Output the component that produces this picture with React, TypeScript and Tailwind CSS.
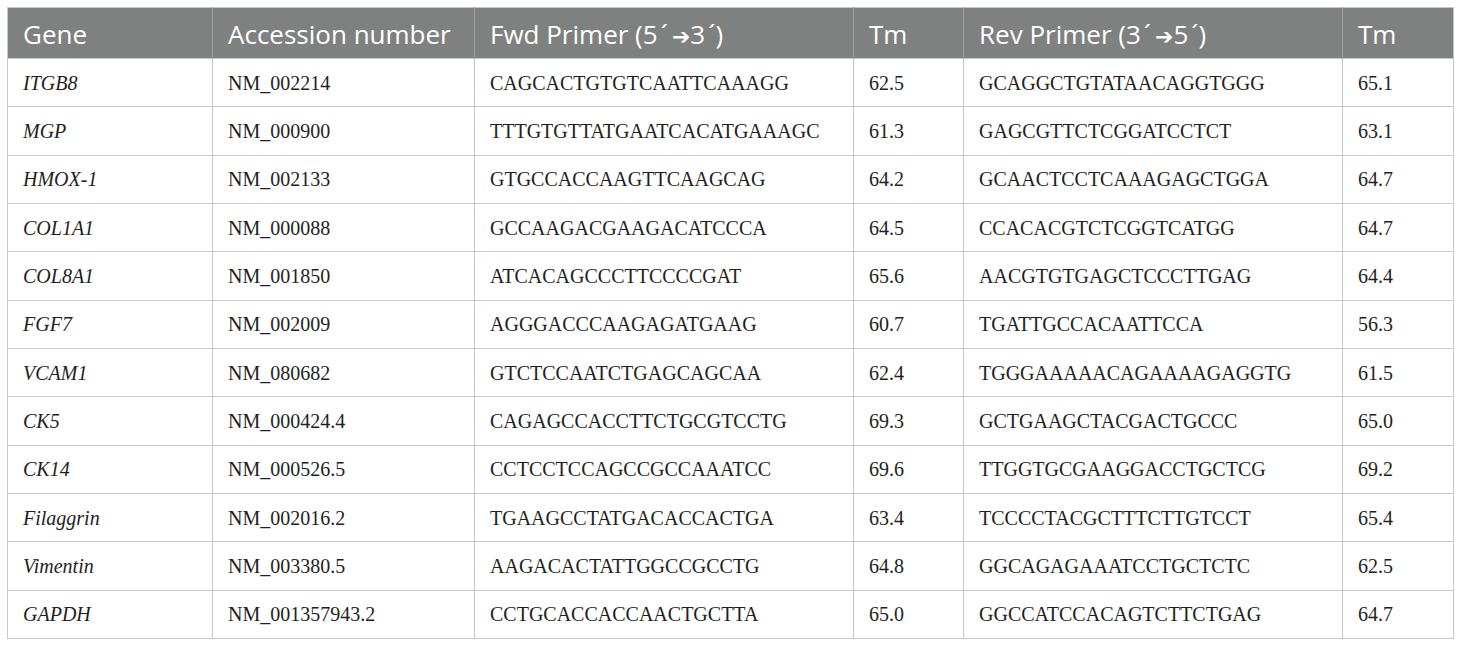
import React from 'react';

type Row = { gene: string; acc: string; fwd: string; tmF: string; rev: string; tmR: string };

const rows: Row[] = [
  { gene: 'ITGB8', acc: 'NM_002214', fwd: 'CAGCACTGTGTCAATTCAAAGG', tmF: '62.5', rev: 'GCAGGCTGTATAACAGGTGGG', tmR: '65.1' },
  { gene: 'MGP', acc: 'NM_000900', fwd: 'TTTGTGTTATGAATCACATGAAAGC', tmF: '61.3', rev: 'GAGCGTTCTCGGATCCTCT', tmR: '63.1' },
  { gene: 'HMOX-1', acc: 'NM_002133', fwd: 'GTGCCACCAAGTTCAAGCAG', tmF: '64.2', rev: 'GCAACTCCTCAAAGAGCTGGA', tmR: '64.7' },
  { gene: 'COL1A1', acc: 'NM_000088', fwd: 'GCCAAGACGAAGACATCCCA', tmF: '64.5', rev: 'CCACACGTCTCGGTCATGG', tmR: '64.7' },
  { gene: 'COL8A1', acc: 'NM_001850', fwd: 'ATCACAGCCCTTCCCCGAT', tmF: '65.6', rev: 'AACGTGTGAGCTCCCTTGAG', tmR: '64.4' },
  { gene: 'FGF7', acc: 'NM_002009', fwd: 'AGGGACCCAAGAGATGAAG', tmF: '60.7', rev: 'TGATTGCCACAATTCCA', tmR: '56.3' },
  { gene: 'VCAM1', acc: 'NM_080682', fwd: 'GTCTCCAATCTGAGCAGCAA', tmF: '62.4', rev: 'TGGGAAAAACAGAAAAGAGGTG', tmR: '61.5' },
  { gene: 'CK5', acc: 'NM_000424.4', fwd: 'CAGAGCCACCTTCTGCGTCCTG', tmF: '69.3', rev: 'GCTGAAGCTACGACTGCCC', tmR: '65.0' },
  { gene: 'CK14', acc: 'NM_000526.5', fwd: 'CCTCCTCCAGCCGCCAAATCC', tmF: '69.6', rev: 'TTGGTGCGAAGGACCTGCTCG', tmR: '69.2' },
  { gene: 'Filaggrin', acc: 'NM_002016.2', fwd: 'TGAAGCCTATGACACCACTGA', tmF: '63.4', rev: 'TCCCCTACGCTTTCTTGTCCT', tmR: '65.4' },
  { gene: 'Vimentin', acc: 'NM_003380.5', fwd: 'AAGACACTATTGGCCGCCTG', tmF: '64.8', rev: 'GGCAGAGAAATCCTGCTCTC', tmR: '62.5' },
  { gene: 'GAPDH', acc: 'NM_001357943.2', fwd: 'CCTGCACCACCAACTGCTTA', tmF: '65.0', rev: 'GGCCATCCACAGTCTTCTGAG', tmR: '64.7' },
];

const th = "h-[51px] px-[15px] pt-[2px] text-left font-normal text-[26px] leading-none text-white border-x border-[#a3a3a3] first:border-l-[#c8c8c8] last:border-r-[#c8c8c8] border-t border-t-[#c8c8c8] align-middle";
const td = "h-[48.33px] px-[15px] text-left border border-[#c8c8c8] align-middle";

const Arrow = ({ a, b }: { a: string; b: string }) => (
  <>
    ({a}<span className="ml-[3px]">´</span>
    <span className="font-['DejaVu_Sans',sans-serif] text-[22px] ml-[4px]">➔</span>
    {b}<span className="ml-[3px]">´</span>)
  </>
);

export default function App() {
  return (
    <div className="bg-white min-h-[646px] pt-[7px] pl-[7px]">
      <table className="border-collapse table-fixed w-[1446px]">
        <colgroup>
          <col className="w-[205px]" />
          <col className="w-[262px]" />
          <col className="w-[379px]" />
          <col className="w-[110px]" />
          <col className="w-[379px]" />
          <col className="w-[111px]" />
        </colgroup>
        <thead>
          <tr className="bg-[#7f8180] font-['Open_Sans',sans-serif]">
            <th className={th}>Gene</th>
            <th className={th}>Accession number</th>
            <th className={th}>Fwd Primer <Arrow a="5" b="3" /></th>
            <th className={th}>Tm</th>
            <th className={th}>Rev Primer <Arrow a="3" b="5" /></th>
            <th className={th}>Tm</th>
          </tr>
        </thead>
        <tbody className="font-['Liberation_Serif',serif] text-[20px] text-[#231f20]">
          {rows.map((r) => (
            <tr key={r.gene}>
              <td className={td + ' italic'}>{r.gene}</td>
              <td className={td}>{r.acc}</td>
              <td className={td}>{r.fwd}</td>
              <td className={td}>{r.tmF}</td>
              <td className={td}>{r.rev}</td>
              <td className={td}>{r.tmR}</td>
            </tr>
          ))}
        </tbody>
      </table>
    </div>
  );
}
